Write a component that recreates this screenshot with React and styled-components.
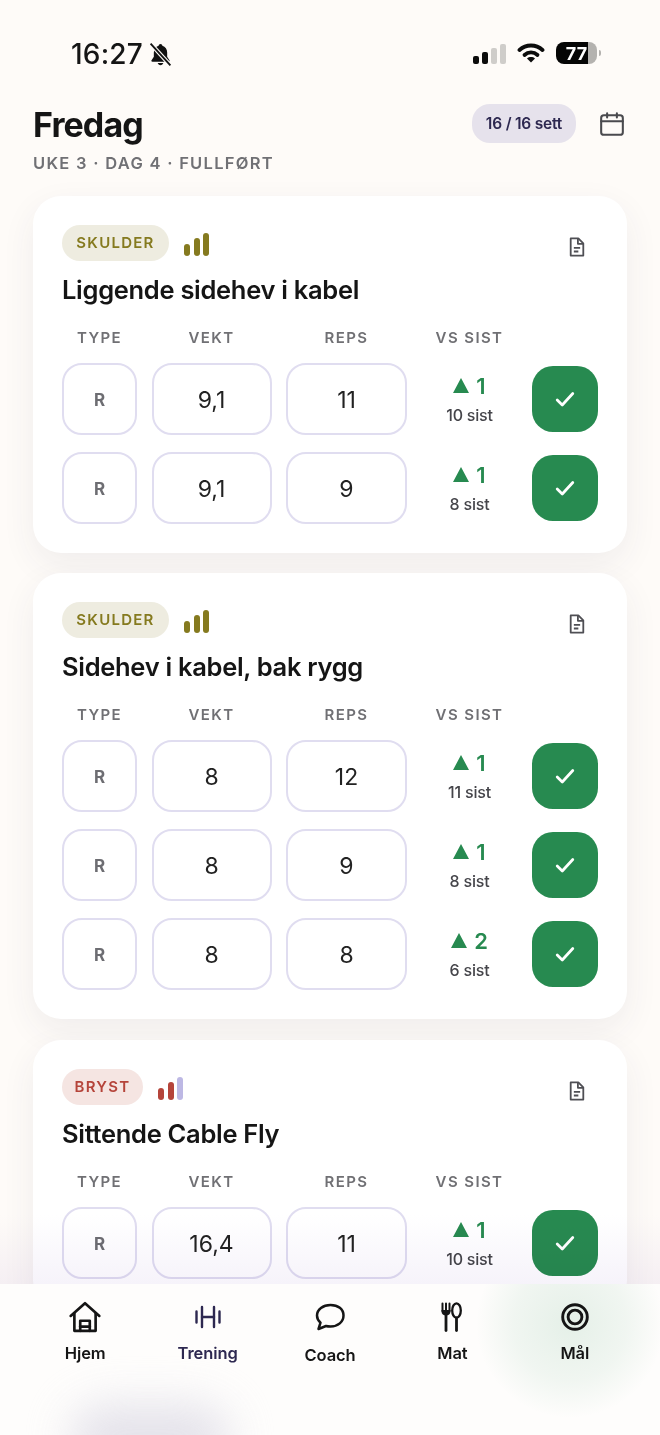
import React from "react";
import styled, { createGlobalStyle } from "styled-components";

const Global = createGlobalStyle`
  html, body { margin: 0; padding: 0; background: #fefbf8; }
  * { box-sizing: border-box; }
`;

const Screen = styled.div`
  position: relative;
  width: 660px;
  height: 1435px;
  overflow: hidden;
  background: #fefbf8;
  font-family: Inter, "Noto Sans", sans-serif;
  color: #151515;
`;

const StatusBar = styled.div`
  display: flex;
  align-items: center;
  justify-content: space-between;
  height: 44px;
  margin-top: 31px;
  padding: 0 60px 0 71px;
`;
const StatusLeft = styled.div`
  display: flex;
  align-items: center;
  gap: 5px;
  margin-top: 2px;
`;
const Time = styled.span`
  font-size: 28px;
  font-weight: 500;
  letter-spacing: 0.2px;
  line-height: 44px;
`;
const StatusRight = styled.div`
  display: flex;
  align-items: center;
  gap: 11px;
`;
const Signal = styled.div`
  display: flex;
  align-items: flex-end;
  gap: 3px;
  height: 21px;
  margin-top: 1px;
`;
const SignalBar = styled.span`
  width: 6px;
  height: ${(p) => p.$h}px;
  border-radius: 2px;
  background: ${(p) => (p.$on ? "#0c0c0c" : "#cfcdca")};
`;
const Battery = styled.div`
  position: relative;
  display: flex;
  align-items: center;
  justify-content: center;
  width: 41px;
  height: 22px;
  border-radius: 8px;
  background: linear-gradient(90deg, #050505 77%, #b4b2af 77%);
  color: #fff;
  font-size: 18px;
  font-weight: 700;
  margin-right: 3px;
  &::after {
    content: "";
    position: absolute;
    right: -4px;
    top: 8px;
    width: 2px;
    height: 6px;
    border-radius: 0 2px 2px 0;
    background: #b4b2af;
  }
`;
const Header = styled.header`
  display: flex;
  justify-content: space-between;
  padding: 25px 33px 0;
  height: 121px;
`;
const HeaderText = styled.div`
  display: flex;
  flex-direction: column;
`;
const Day = styled.h1`
  margin: 0;
  font-size: 34px;
  font-weight: 700;
  letter-spacing: -0.9px;
  line-height: 50px;
  color: #151515;
`;
const Sub = styled.div`
  font-size: 16.5px;
  font-weight: 600;
  letter-spacing: 1.28px;
  color: #707074;
  line-height: 22px;
  margin-top: 2px;
`;
const HeaderRight = styled.div`
  display: flex;
  align-items: flex-start;
  gap: 23px;
  padding-right: 2px;
  padding-top: 4px;
`;
const SetPill = styled.div`
  width: 104px;
  height: 39px;
  display: flex;
  align-items: center;
  justify-content: center;
  border-radius: 18px;
  background: #e6e2ec;
  color: #2d2850;
  font-size: 15.5px;
  font-weight: 600;
  letter-spacing: -0.2px;
`;
const CalendarWrap = styled.div`
  height: 39px;
  display: flex;
  align-items: center;
  color: #4a4a4e;
`;
const Cards = styled.main`
  display: flex;
  flex-direction: column;
  gap: 20px;
  padding: 0 33px;
`;
const Card = styled.section`
  background: #fff;
  border-radius: 28px;
  padding: 29px;
  box-shadow: 0 12px 34px rgba(60, 50, 90, 0.07);
  &:last-child {
    margin-top: 1px;
  }
`;
const CardTop = styled.div`
  display: flex;
  align-items: center;
  justify-content: space-between;
  height: 36px;
  padding-right: 12px;
`;
const TagGroup = styled.div`
  display: flex;
  align-items: center;
  gap: 15px;
`;
const Tag = styled.span`
  display: flex;
  align-items: center;
  justify-content: center;
  width: ${(p) => p.$w}px;
  height: 36px;
  padding-bottom: 2px;
  border-radius: 18px;
  background: ${(p) => p.$bg};
  color: ${(p) => p.$fg};
  font-size: 15px;
  font-weight: 600;
  letter-spacing: 1.25px;
`;
const Bars = styled.div`
  display: flex;
  align-items: flex-end;
  gap: 3.5px;
  height: 24px;
  margin-top: 2px;
`;
const Bar = styled.span`
  width: 6px;
  height: ${(p) => p.$h}px;
  border-radius: 3px;
  background: ${(p) => p.$c};
`;
const NoteWrap = styled.div`
  display: flex;
  margin-top: 8px;
`;
const Title = styled.h2`
  margin: 11px 0 0;
  font-size: 25.5px;
  line-height: 36px;
  font-weight: 600;
  letter-spacing: -0.3px;
  color: #151515;
`;
const Grid = styled.div`
  display: grid;
  grid-template-columns: 75px 120px 121px 96px 66px;
  column-gap: 14.5px;
  align-items: center;
`;
const Labels = styled(Grid)`
  margin-top: 17px;
  height: 24px;
  margin-bottom: 14px;
`;
const Label = styled.span`
  text-align: center;
  font-size: 15px;
  font-weight: 600;
  letter-spacing: 1.4px;
  color: #707074;
`;
const Rows = styled.div`
  display: flex;
  flex-direction: column;
  gap: 17px;
`;
const Field = styled.div`
  height: 72px;
  display: flex;
  align-items: center;
  justify-content: center;
  padding-top: 2px;
  border: 2px solid #e0ddf0;
  border-radius: 20px;
  background: #fff;
  color: ${(p) => (p.$type ? "#6d6d72" : "#222")};
  font-size: ${(p) => (p.$type ? "17px" : "23px")};
  font-weight: ${(p) => (p.$type ? 700 : 400)};
`;
const Versus = styled.div`
  display: flex;
  flex-direction: column;
  align-items: center;
  gap: 5px;
`;
const Delta = styled.div`
  display: flex;
  align-items: center;
  gap: 7px;
  height: 26px;
  color: #278a50;
  font-size: 22px;
  font-weight: 600;
`;
const Triangle = styled.span`
  width: 0;
  height: 0;
  border-left: 8px solid transparent;
  border-right: 8px solid transparent;
  border-bottom: 15px solid #278a50;
`;
const Last = styled.div`
  font-size: 16px;
  font-weight: 500;
  letter-spacing: -0.2px;
  line-height: 22px;
  color: #45454a;
`;
const Done = styled.button`
  width: 66px;
  height: 66px;
  padding: 0;
  border: 0;
  border-radius: 21px;
  background: #278a50;
  display: flex;
  align-items: center;
  justify-content: center;
`;
const Fade = styled.div`
  position: absolute;
  left: 0;
  right: 0;
  top: 1215px;
  height: 69px;
  background: linear-gradient(180deg, #ffffff 0%, #f6f3fa 100%);
  mix-blend-mode: multiply;
  pointer-events: none;
`;
const Nav = styled.nav`
  position: absolute;
  left: 0;
  right: 0;
  top: 1284px;
  bottom: 0;
  display: flex;
  align-items: flex-start;
  padding: 0 24px;
  background: #fefdfc;
  overflow: hidden;
`;
const Glow = styled.div`
  position: absolute;
  left: 475px;
  top: -55px;
  width: 190px;
  height: 190px;
  border-radius: 50%;
  background: radial-gradient(circle, rgba(60, 150, 95, 0.13) 0%, rgba(60, 150, 95, 0.07) 42%, rgba(60, 150, 95, 0) 70%);
`;
const HomeBlur = styled.div`
  position: absolute;
  left: 70px;
  top: 120px;
  width: 160px;
  height: 70px;
  border-radius: 35px;
  background: #dedce6;
  opacity: 0.8;
  filter: blur(22px);
`;
const NavItem = styled.div`
  position: relative;
  width: 122.5px;
  display: flex;
  flex-direction: column;
  align-items: center;
  padding-top: 15px;
  color: ${(p) => (p.$active ? "#2d2850" : "#151515")};
`;
const NavIcon = styled.div`
  height: 36px;
  display: flex;
  align-items: center;
  justify-content: center;
`;
const NavLabel = styled.span`
  margin-top: ${(p) => p.$drop ?? 6}px;
  font-size: 16.5px;
  line-height: 24px;
  font-weight: 600;
  letter-spacing: -0.1px;
`;

const Bell = () => (
  <svg width="25" height="25" viewBox="0 0 24 24" fill="#111">
    <path d="M12 2c-1 0-1.700.7-1.800 1.600C7.300 4.400 5.600 7 5.600 10v4.200L3.400 17.600c-.5.7 0 1.400.8 1.400h15.600c.8 0 1.300-.7.8-1.400l-2.200-3.400V10c0-3-1.700-5.600-4.600-6.400C13.700 2.700 13 2 12 2z" />
    <path d="M9.300 20.200c.3 1.200 1.400 2 2.700 2s2.400-.8 2.700-2z" />
    <path d="M2.500 1.500l19 21" stroke="#fefbf8" strokeWidth="4" />
    <path d="M2.500 1.500l19 21" stroke="#111" strokeWidth="1.800" />
  </svg>
);
const Wifi = () => (
  <svg width="28" height="22" viewBox="0 0 28 22" fill="none" stroke="#0c0c0c" strokeLinecap="round">
    <path d="M2.500 8c6.500-6 16.500-6 23 0" strokeWidth="3.800" />
    <path d="M7.500 13c3.700-3.400 9.300-3.400 13 0" strokeWidth="3.800" />
    <path d="M14 20.500l-4-4c2.200-1.900 5.800-1.900 8 0z" fill="#0c0c0c" stroke="none" />
  </svg>
);
const Calendar = () => (
  <svg width="26" height="26" viewBox="0 0 24 24" fill="none" stroke="currentColor" strokeWidth="1.900" strokeLinecap="round" strokeLinejoin="round">
    <path d="M7.500 2v4M16.500 2v4" />
    <rect x="2" y="4" width="20" height="18" rx="2.500" />
    <path d="M2 9.500h20" />
  </svg>
);
const Note = () => (
  <svg width="18" height="20" viewBox="0 0 20 22" fill="none" stroke="#4f4f54" strokeWidth="2" strokeLinejoin="round">
    <path d="M3 1.500h8.500l5.500 5.500v13.500H3z" />
    <path d="M11 1.500V7.500h6" />
    <path d="M6.500 12h7M6.500 16h5" />
  </svg>
);
const Check = () => (
  <svg width="22" height="22" viewBox="0 0 24 24" fill="none" stroke="#fff" strokeWidth="3" strokeLinecap="round" strokeLinejoin="round">
    <path d="M3.500 13l5.500 5.500L20.500 6" />
  </svg>
);
const HomeIcon = () => (
  <svg width="34" height="34" viewBox="0 0 32 32" fill="none" stroke="currentColor" strokeWidth="2.500" strokeLinejoin="round" strokeLinecap="round">
    <path d="M2.500 15L16 3l13.500 12" />
    <path d="M6 12.500V29h20V12.500" />
    <path d="M11.500 29v-9.500h9V29" />
    <path d="M11.500 25h9" />
  </svg>
);
const Barbell = () => (
  <svg width="26" height="24" viewBox="0 0 26 24" fill="none" stroke="currentColor" strokeWidth="2.400" strokeLinecap="round">
    <path d="M1.500 6.500v11M7 2v20M19 2v20M24.500 6.500v11" />
    <path d="M7 12h12" />
  </svg>
);
const Bubble = () => (
  <svg width="32" height="30" viewBox="0 0 32 30" fill="none" stroke="currentColor" strokeWidth="2.500" strokeLinejoin="round">
    <path d="M16.500 3C9 3 3 7.600 3 13.500c0 2.800 1.300 5.300 3.500 7.200L4.500 27l7.500-3c1.400.4 2.900.5 4.500.5 7.500 0 13-4.600 13-11S24 3 16.500 3z" />
  </svg>
);
const Cutlery = () => (
  <svg width="22" height="30" viewBox="0 0 22 30" fill="none" stroke="currentColor" strokeLinecap="round">
    <path d="M1.500 1.500V9M5 1.500V9M8.500 1.500V9" strokeWidth="2" />
    <path d="M.5 8h9v1.500c0 2.500-2 4-4.500 4S.5 12 .5 9.500z" fill="currentColor" stroke="none" />
    <path d="M5 13v15.500" strokeWidth="2.800" />
    <ellipse cx="15.500" cy="8.500" rx="4.300" ry="7.200" strokeWidth="2.300" />
    <path d="M15.500 16v12.500" strokeWidth="2.800" />
  </svg>
);
const Target = () => (
  <svg width="30" height="30" viewBox="0 0 30 30" fill="none" stroke="currentColor">
    <circle cx="15" cy="15" r="12.300" strokeWidth="2.900" />
    <circle cx="15" cy="15" r="6.900" strokeWidth="2.900" />
  </svg>
);

const olive = { w: 107, bg: "#eeece0", fg: "#857a1f", bars: ["#857a1f", "#857a1f", "#857a1f"] };
const red = { w: 81, bg: "#f5e5e2", fg: "#b5443a", bars: ["#b5443a", "#b5443a", "#bdb8e4"] };

const exercises = [
  {
    tag: "SKULDER",
    tone: olive,
    title: "Liggende sidehev i kabel",
    sets: [
      ["9,1", "11", 1, "10 sist"],
      ["9,1", "9", 1, "8 sist"],
    ],
  },
  {
    tag: "SKULDER",
    tone: olive,
    title: "Sidehev i kabel, bak rygg",
    sets: [
      ["8", "12", 1, "11 sist"],
      ["8", "9", 1, "8 sist"],
      ["8", "8", 2, "6 sist"],
    ],
  },
  {
    tag: "BRYST",
    tone: red,
    title: "Sittende Cable Fly",
    sets: [["16,4", "11", 1, "10 sist"]],
  },
];

const heights = [12, 18, 23];
const labels = ["TYPE", "VEKT", "REPS", "VS SIST"];

const nav = [
  { label: "Hjem", Icon: HomeIcon },
  { label: "Trening", Icon: Barbell, active: true },
  { label: "Coach", Icon: Bubble, drop: 8 },
  { label: "Mat", Icon: Cutlery },
  { label: "Mål", Icon: Target },
];

export default function App() {
  return (
    <Screen>
      <Global />
      <StatusBar>
        <StatusLeft>
          <Time>16:27</Time>
          <Bell />
        </StatusLeft>
        <StatusRight>
          <Signal>
            <SignalBar $on $h={8} />
            <SignalBar $on $h={12} />
            <SignalBar $h={16} />
            <SignalBar $h={20} />
          </Signal>
          <Wifi />
          <Battery>77</Battery>
        </StatusRight>
      </StatusBar>
      <Header>
        <HeaderText>
          <Day>Fredag</Day>
          <Sub>UKE 3 · DAG 4 · FULLFØRT</Sub>
        </HeaderText>
        <HeaderRight>
          <SetPill>16 / 16 sett</SetPill>
          <CalendarWrap>
            <Calendar />
          </CalendarWrap>
        </HeaderRight>
      </Header>
      <Cards>
        {exercises.map((ex) => (
          <Card key={ex.title}>
            <CardTop>
              <TagGroup>
                <Tag $w={ex.tone.w} $bg={ex.tone.bg} $fg={ex.tone.fg}>{ex.tag}</Tag>
                <Bars>
                  {ex.tone.bars.map((c, i) => (
                    <Bar key={i} $c={c} $h={heights[i]} />
                  ))}
                </Bars>
              </TagGroup>
              <NoteWrap>
                <Note />
              </NoteWrap>
            </CardTop>
            <Title>{ex.title}</Title>
            <Labels>
              {labels.map((l) => (
                <Label key={l}>{l}</Label>
              ))}
            </Labels>
            <Rows>
              {ex.sets.map((s, i) => (
                <Grid key={i}>
                  <Field $type>R</Field>
                  <Field>{s[0]}</Field>
                  <Field>{s[1]}</Field>
                  <Versus>
                    <Delta>
                      <Triangle />
                      {s[2]}
                    </Delta>
                    <Last>{s[3]}</Last>
                  </Versus>
                  <Done aria-label="Fullført">
                    <Check />
                  </Done>
                </Grid>
              ))}
            </Rows>
          </Card>
        ))}
      </Cards>
      <Fade />
      <Nav>
        <Glow />
        <HomeBlur />
        {nav.map(({ label, Icon, active, drop }) => (
          <NavItem key={label} $active={active}>
            <NavIcon>
              <Icon />
            </NavIcon>
            <NavLabel $drop={drop}>{label}</NavLabel>
          </NavItem>
        ))}
      </Nav>
    </Screen>
  );
}
